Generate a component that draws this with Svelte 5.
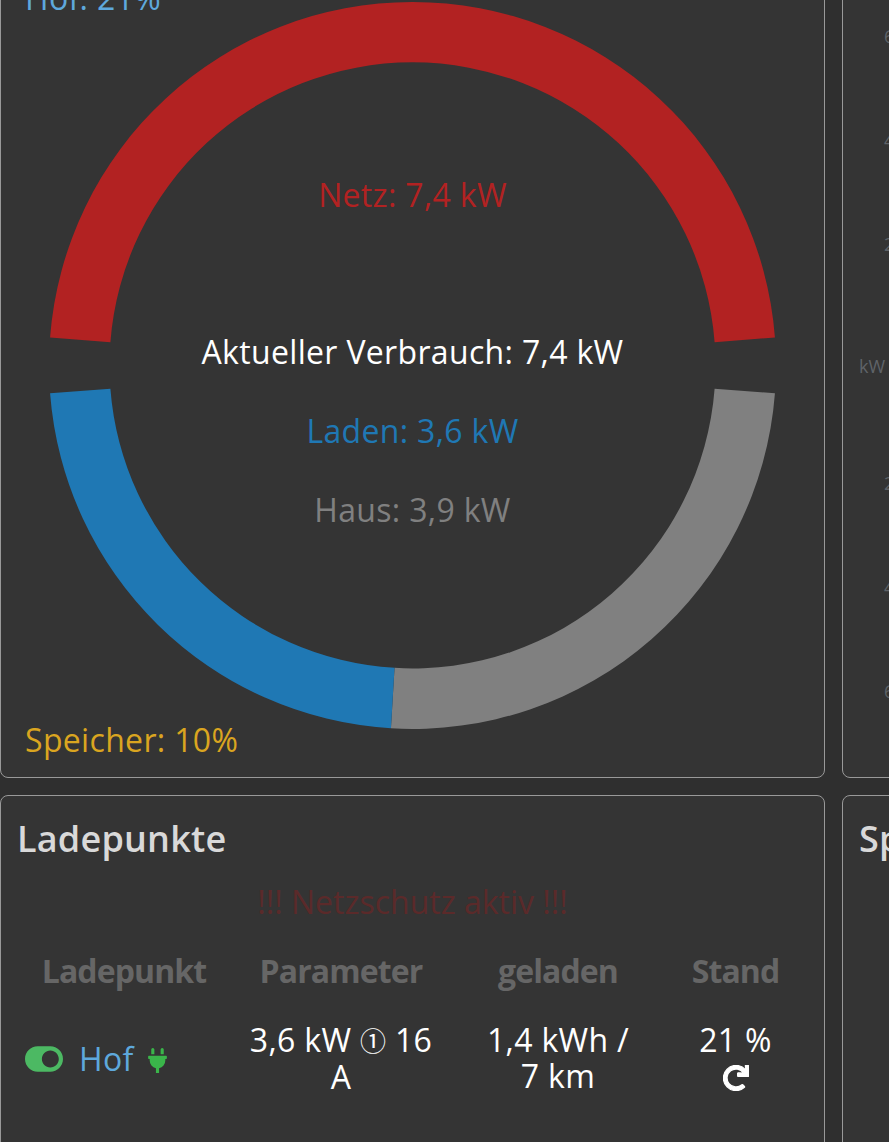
<script lang="ts">
	// center and radii of the power donut, in page coordinates
	const cx = 412.5;
	const cy = 365.4;
	const outer = 363.5;
	const inner = 303;

	function point(r: number, deg: number) {
		const a = (deg * Math.PI) / 180;
		return `${(cx + r * Math.sin(a)).toFixed(2)} ${(cy - r * Math.cos(a)).toFixed(2)}`;
	}

	function arc(from: number, to: number) {
		const large = to - from > 180 ? 1 : 0;
		return `M${point(outer, from)}A${outer} ${outer} 0 ${large} 1 ${point(outer, to)}L${point(inner, to)}A${inner} ${inner} 0 ${large} 0 ${point(inner, from)}Z`;
	}

	const segments = [
		{color: '#b22222', from: -85.6, to: 85.6},
		{color: '#808080', from: 94.4, to: 183.4},
		{color: '#1f78b4', from: 183.4, to: 265.6}
	];

	const labels = [
		{text: 'Netz: 7,4 kW', y: 207, color: '#b22222'},
		{text: 'Aktueller Verbrauch: 7,4 kW', y: 364, color: '#ffffff'},
		{text: 'Laden: 3,6 kW', y: 443, color: '#1f78b4'},
		{text: 'Haus: 3,9 kW', y: 522, color: '#808080'}
	];

	const ticks = [
		{text: '6', y: 43},
		{text: '4', y: 147},
		{text: '2', y: 251},
		{text: '2', y: 490},
		{text: '4', y: 594},
		{text: '6', y: 698}
	];
</script>

<main>
	<div class="grid">
		<section class="card">
			<svg class="donut" viewBox="1 -29 823 806" role="img" aria-label="Aktueller Verbrauch">
				{#each segments as s}
					<path d={arc(s.from, s.to)} fill={s.color} />
				{/each}
				{#each labels as l}
					<text x={cx} y={l.y} text-anchor="middle" fill={l.color}>{l.text}</text>
				{/each}
				<text x="25" y="10" class="hof">Hof: 21%</text>
				<text x="25" y="752" class="speicher">Speicher: 10%</text>
			</svg>
		</section>

		<section class="card">
			<svg class="axis" viewBox="843 -29 823 806" role="img" aria-label="Leistung">
				{#each ticks as t}
					<text x="884" y={t.y}>{t.text}</text>
				{/each}
				<text x="859" y="373">kW</text>
			</svg>
		</section>

		<section class="card lower">
			<h2>Ladepunkte</h2>
			<p class="warning">!!! Netzschutz aktiv !!!</p>
			<table>
				<thead>
					<tr>
						<th class="c1">Ladepunkt</th>
						<th class="c2">Parameter</th>
						<th class="c3">geladen</th>
						<th class="c4">Stand</th>
					</tr>
				</thead>
				<tbody>
					<tr>
						<td>
							<div class="name">
								<svg class="toggle" viewBox="0 0 576 512" aria-hidden="true"><path d="M384 64H192C86 64 0 150 0 256s86 192 192 192h192c106 0 192-86 192-192S490 64 384 64zm0 320c-70.8 0-128-57.3-128-128 0-70.8 57.3-128 128-128 70.8 0 128 57.3 128 128 0 70.8-57.3 128-128 128z" /></svg>
								<span class="lp">Hof</span>
								<svg class="plug" viewBox="0 0 384 512" aria-hidden="true"><path d="M320,32a32,32,0,0,0-64,0v96h64Zm48,128H16A16,16,0,0,0,0,176v32a16,16,0,0,0,16,16H32v32A160.07,160.07,0,0,0,160,412.8V512h64V412.8A160.07,160.07,0,0,0,352,256V224h16a16,16,0,0,0,16-16V176A16,16,0,0,0,368,160ZM128,32a32,32,0,0,0-64,0v96h64Z" /></svg>
							</div>
						</td>
						<td>3,6 kW <span class="phase">①</span> 16 A</td>
						<td>1,4 kWh / 7&nbsp;km</td>
						<td>
							21 %
							<svg class="redo" viewBox="0 0 512 512" aria-hidden="true"><path d="M500.33 0h-47.41a12 12 0 0 0-12 12.57l4 82.76A247.42 247.42 0 0 0 256 8C119.34 8 8.9 119.53 8 256.19 7.1 393.07 118.08 504 256 504a247.1 247.1 0 0 0 166.18-63.91 12 12 0 0 0 .48-17.43l-34-34a12 12 0 0 0-16.38-.55A176 176 0 1 1 402.1 157.8l-101.53-4.87a12 12 0 0 0-12.57 12v47.41a12 12 0 0 0 12 12h200.33a12 12 0 0 0 12-12V12a12 12 0 0 0-12-12z" /></svg>
						</td>
					</tr>
				</tbody>
			</table>
		</section>

		<section class="card lower">
			<h2>Speicher</h2>
		</section>
	</div>
</main>

<style>
	:global(body) {
		background: #2f2f2f;
		overflow: hidden;
	}

	main {
		width: 889px;
		height: 1142px;
		overflow: hidden;
		font-family: 'Open Sans', 'Noto Sans CJK SC', sans-serif;
		font-size: 32px;
		letter-spacing: 0.33px;
		color: #fff;
	}

	.grid {
		display: grid;
		grid-template-columns: 825px 825px;
		grid-template-rows: 808px 400px;
		gap: 17px;
		margin-top: -30px;
	}

	.card {
		background: #343434;
		border: 1px solid #999;
		border-radius: 8px;
		box-sizing: border-box;
	}

	.lower {
		padding: 17px 17px 15px;
	}

	svg {
		display: block;
	}

	.donut,
	.axis {
		width: 823px;
		height: 806px;
	}

	.hof {
		fill: #5ea8dc;
	}

	.speicher {
		fill: #daa520;
	}

	.axis text {
		fill: #5f6368;
		font-size: 18px;
		letter-spacing: 0;
	}

	h2 {
		margin: 0 0 0 -1px;
		font-size: 36px;
		font-weight: 600;
		line-height: 52px;
		letter-spacing: 0.2px;
		color: #d9d9d9;
		white-space: nowrap;
	}

	.warning {
		margin: 15px 0 0;
		text-align: center;
		color: #5b2a2a;
		line-height: 44px;
		letter-spacing: 0;
	}

	table {
		width: 789px;
		margin-top: 25px;
		border-collapse: collapse;
		table-layout: fixed;
	}

	th {
		color: #666;
		font-weight: 700;
		line-height: 44px;
		letter-spacing: -0.9px;
		padding: 0;
	}

	.c1 {
		width: 212px;
	}
	.c2 {
		width: 222px;
	}
	.c3 {
		width: 212px;
	}
	.c4 {
		width: 143px;
	}

	td {
		padding: 29px 18px 0;
		line-height: 36px;
		text-align: center;
		vertical-align: top;
	}

	td:first-child {
		padding: 29px 0 0;
		vertical-align: middle;
	}

	.name {
		display: flex;
		align-items: center;
		padding-left: 7px;
	}

	.phase {
		font-size: 26px;
		vertical-align: 1px;
	}

	.toggle {
		width: 38px;
		height: 34px;
		fill: #4cb963;
	}

	.lp {
		margin-left: 16px;
		color: #5ea8dc;
	}

	.plug {
		width: 19px;
		height: 25px;
		margin: 4px 0 0 14px;
		fill: #3ab54a;
	}

	.redo {
		width: 26px;
		height: 26px;
		margin: 7px auto 0;
		fill: #fff;
		stroke: #fff;
		stroke-width: 24;
	}
</style>
